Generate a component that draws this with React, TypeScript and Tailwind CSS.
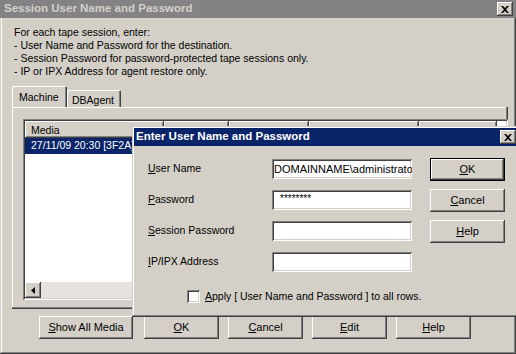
import React from 'react';

const raised =
  'bg-[#d4d0c8] shadow-[inset_-1px_-1px_#404040,inset_1px_1px_#ffffff,inset_-2px_-2px_#808080,inset_2px_2px_#d4d0c8]';
const sunken =
  'bg-white shadow-[inset_1px_1px_#808080,inset_-1px_-1px_#ffffff,inset_2px_2px_#404040,inset_-2px_-2px_#d4d0c8]';

function CloseBox() {
  return (
    <div className={`w-[16px] h-[14px] flex items-center justify-center ${raised}`}>
      <svg width="8" height="7" viewBox="0 0 8 7">
        <path d="M0 0h2l2 2 2-2h2L5 3.5 8 7H6L4 5 2 7H0l3-3.5z" fill="#000" />
      </svg>
    </div>
  );
}

function Btn({ label, ul, w = 'w-[75px]', isDefault = false }: { label: string; ul: number; w?: string; isDefault?: boolean }) {
  return (
    <div
      className={`${w} h-[23px] flex items-center justify-center ${raised} ${
        isDefault ? 'outline outline-1 outline-black -outline-offset-1 shadow-[inset_-2px_-2px_#404040,inset_2px_2px_#ffffff,inset_-3px_-3px_#808080]' : ''
      }`}
    >
      <span>
        {label.slice(0, ul)}
        <u>{label[ul]}</u>
        {label.slice(ul + 1)}
      </span>
    </div>
  );
}

function Field({ label, value, mono }: { label: [string, string]; value?: string; mono?: boolean }) {
  return (
    <div className="flex items-center h-[20px]">
      <div className="w-[124px]">
        <u>{label[0]}</u>
        {label[1]}
      </div>
      <div className={`w-[140px] h-[20px] px-[3px] flex items-center overflow-hidden whitespace-nowrap ${sunken}`}>
        <span className={mono ? 'text-[10px] ml-[5px] -mt-[3px]' : 'ml-[-1px] text-[11px]'}>{value}</span>
      </div>
    </div>
  );
}

export default function App() {
  return (
    <div className="w-[516px] h-[354px] relative overflow-hidden bg-[#d4d0c8] text-[10.5px] text-black font-['Liberation_Sans',Arial,sans-serif] shadow-[inset_-1px_-1px_#404040,inset_1px_1px_#d4d0c8,inset_-2px_-2px_#808080,inset_2px_2px_#ffffff]">
      {/* Outer window title */}
      <div className="h-[18px] bg-[#848284] flex items-center justify-between pl-[4px] pr-[3px]">
        <span className="font-bold text-[11.5px] text-[#d4d0c8]">Session User Name and Password</span>
        <CloseBox />
      </div>

      <div className="pl-[14px] pt-[8px] leading-[13px]">
        <p>For each tape session, enter:</p>
        <p>- User Name and Password for the destination.</p>
        <p>- Session Password for password-protected tape sessions only.</p>
        <p>- IP or IPX Address for agent restore only.</p>
      </div>

      {/* Tabs */}
      <div className="flex items-end ml-[12px] mt-[8px] h-[21px]">
        <div className="h-[21px] w-[55px] pl-[7px] pt-[4px] rounded-t-[2px] shadow-[inset_1px_1px_#ffffff,inset_-1px_0_#404040,inset_-2px_0_#808080]">
          Machine
        </div>
        <div className="h-[17px] w-[54px] pl-[5px] pt-[3px] rounded-t-[2px] shadow-[inset_1px_1px_#ffffff,inset_-1px_0_#404040,inset_-2px_0_#808080]">
          DBAgent
        </div>
      </div>

      {/* Tab panel */}
      <div className="ml-[12px] w-[496px] h-[202px] pt-[12px] pl-[11px] shadow-[inset_-1px_-1px_#404040,inset_-2px_-2px_#808080,inset_1px_1px_#ffffff]">
        <div className={`w-[485px] h-[181px] p-[2px] flex flex-col ${sunken}`}>
          <div className="flex h-[17px] whitespace-nowrap">
            {['w-[139px]', 'w-[65px]', 'w-[80px]', 'w-[110px]', 'w-[78px]'].map((w, i) => (
              <div key={w} className={`${w} h-[17px] pl-[6px] pt-[2px] overflow-hidden ${raised}`}>
                {i === 0 ? 'Media' : ''}
              </div>
            ))}
          </div>
          <div className="h-[16px] w-[108px] bg-[#0a246a] text-white pl-[6px] flex items-center whitespace-nowrap overflow-hidden">
            27/11/09 20:30 [3F2A]
          </div>
          <div className="flex-1" />
          <div className="h-[16px] flex bg-[#e6e3de]">
            <div className={`w-[16px] h-[16px] flex items-center justify-center ${raised}`}>
              <svg width="4" height="7" viewBox="0 0 4 7">
                <path d="M4 0v7L0 3.5z" fill="#000" />
              </svg>
            </div>
          </div>
        </div>
      </div>

      {/* Bottom buttons */}
      <div className="flex gap-[9px] ml-[39px] mt-[7px] text-[11px]">
        <div className="mr-[2px]">
          <Btn label="Show All Media" ul={0} w="w-[94px]" />
        </div>
        <Btn label="OK" ul={0} />
        <Btn label="Cancel" ul={0} />
        <Btn label="Edit" ul={0} />
        <Btn label="Help" ul={0} />
      </div>

      {/* Enter User Name and Password dialog */}
      <div className="absolute left-[132px] top-[126px] w-[388px] h-[191px] p-[2px] bg-[#d4d0c8] shadow-[inset_-1px_-1px_#404040,inset_1px_1px_#d4d0c8,inset_-2px_-2px_#808080,inset_2px_2px_#ffffff]">
        <div className="h-[18px] bg-[#0a246a] flex items-center justify-between pl-[2px] pr-[2px]">
          <span className="font-bold text-[11.5px] text-white">Enter User Name and Password</span>
          <CloseBox />
        </div>
        <div className="flex pl-[14px] pt-[13px]">
          <div className="flex flex-col gap-[11px]">
            <Field label={['U', 'ser Name']} value="DOMAINNAME\administrato" />
            <Field label={['P', 'assword']} value="********" mono />
            <Field label={['S', 'ession Password']} />
            <Field label={['I', 'P/IPX Address']} />
          </div>
          <div className="flex flex-col gap-[8px] ml-[18px] -mt-[1px] text-[11px]">
            <Btn label="OK" ul={0} isDefault />
            <Btn label="Cancel" ul={0} />
            <Btn label="Help" ul={0} />
          </div>
        </div>
        <div className="flex items-center ml-[53px] mt-[17px] gap-[5px]">
          <div className={`w-[13px] h-[13px] ${sunken}`} />
          <span>
            <u>A</u>pply [ User Name and Password ] to all rows.
          </span>
        </div>
      </div>
    </div>
  );
}
